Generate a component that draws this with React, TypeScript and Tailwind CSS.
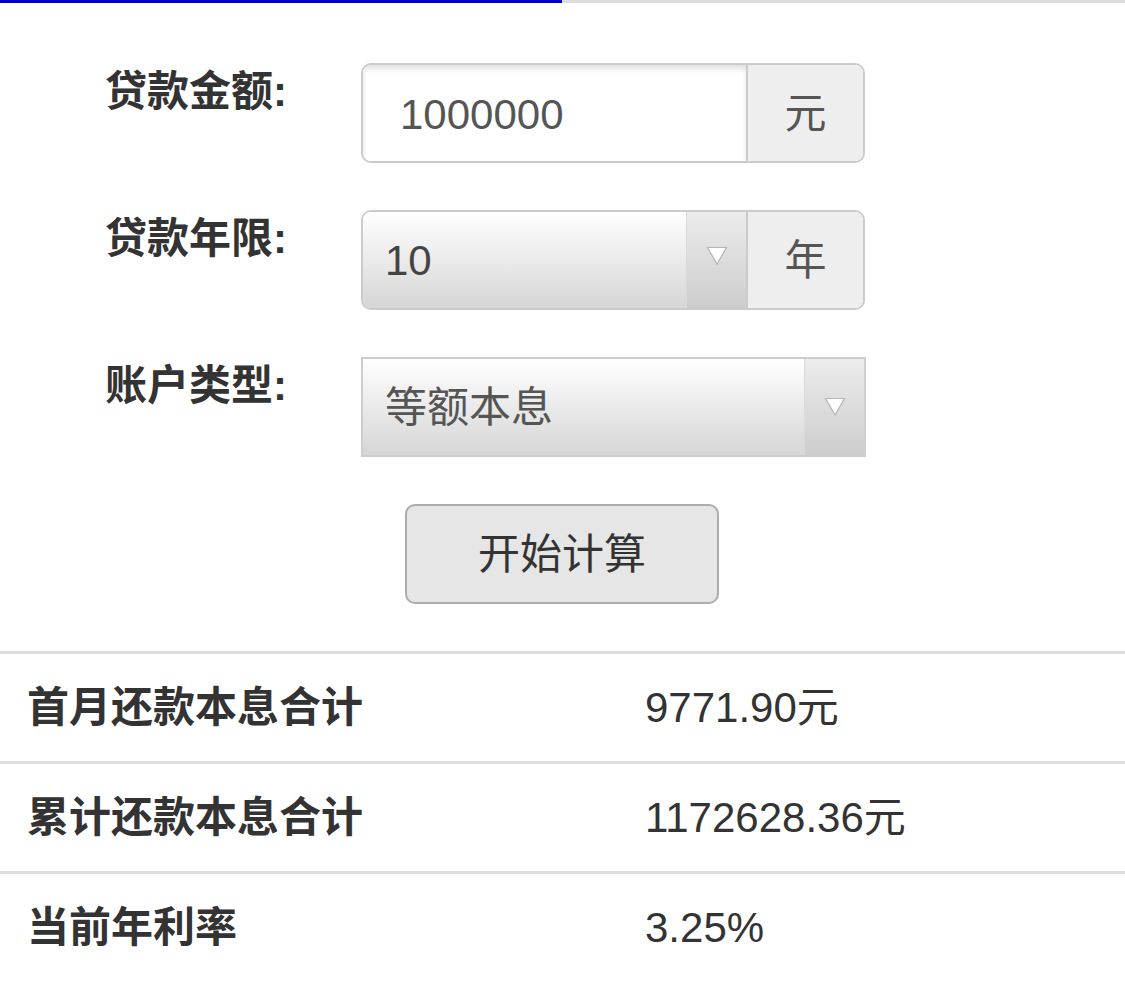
import React from "react";

const FONT = "font-['Liberation_Sans','Noto_Sans_CJK_SC',sans-serif]";

function Arrow() {
  return (
    <svg width="22" height="20" viewBox="0 0 22 20">
      <polygon points="1.5,1.5 20.5,1.5 11,18" fill="#ffffff" stroke="#b5b5b5" strokeWidth="1.2" />
    </svg>
  );
}

function FieldRow({ label, children }: { label: string; children: React.ReactNode }) {
  return (
    <div className="flex items-start pl-[105px] h-[100px]">
      <div className="w-[256px] text-[42px] leading-[58px] font-bold text-[#333]">{label}:</div>
      {children}
    </div>
  );
}

const results = [
  { label: "首月还款本息合计", value: "9771.90元" },
  { label: "累计还款本息合计", value: "1172628.36元" },
  { label: "当前年利率", value: "3.25%" },
];

export default function App() {
  return (
    <div className={`w-[1125px] min-h-[992px] bg-white ${FONT}`}>
      <div className="flex h-[3px] bg-[#dcdcdc]">
        <div className="w-[562px] bg-[#0000d4]" />
      </div>

      <div className="pt-[60px] flex flex-col gap-[47px]">
        <FieldRow label="贷款金额">
          <div className="flex w-[504px] h-[100px] border-2 border-[#cbcbcb] rounded-[10px] overflow-hidden">
            <div className="flex-1 flex items-center pl-[37px] pt-[3px] bg-white shadow-[inset_0_4px_5px_rgba(0,0,0,0.12)] text-[42px] text-[#555]">
              1000000
            </div>
            <div className="w-[117px] flex items-center justify-center bg-[#eeeeee] border-l-2 border-[#cbcbcb] text-[42px] text-[#555]">
              元
            </div>
          </div>
        </FieldRow>

        <FieldRow label="贷款年限">
          <div className="flex w-[504px] h-[100px] border-2 border-[#cbcbcb] rounded-[10px] overflow-hidden">
            <div className="flex-1 flex items-center pl-[22px] bg-linear-to-b from-[#ffffff] to-[#d6d6d6] text-[42px] text-[#444]">
              10
            </div>
            <div className="w-[60px] flex items-start justify-center pt-[34px] bg-linear-to-b from-[#ececec] to-[#cdcdcd] border-l border-[#dadada]">
              <Arrow />
            </div>
            <div className="w-[117px] flex items-center justify-center bg-[#eeeeee] border-l-2 border-[#cbcbcb] text-[42px] text-[#555]">
              年
            </div>
          </div>
        </FieldRow>

        <FieldRow label="账户类型">
          <div className="flex w-[505px] h-[100px] border-2 border-[#cdcdcd]">
            <div className="flex-1 flex items-center pl-[22px] bg-linear-to-b from-[#ffffff] to-[#d6d6d6] text-[42px] text-[#555]">
              等额本息
            </div>
            <div className="w-[60px] flex items-center justify-center bg-linear-to-b from-[#ececec] to-[#cdcdcd] border-l border-[#dadada]">
              <Arrow />
            </div>
          </div>
        </FieldRow>

        <div className="flex justify-center pr-[1px]">
          <button className="w-[314px] h-[100px] rounded-[10px] border-2 border-[#acacac] bg-[#e6e6e6] text-[42px] text-[#333]">
            开始计算
          </button>
        </div>
      </div>

      <div className="mt-[47px]">
        {results.map((r) => (
          <div key={r.label} className="flex items-center h-[110px] border-t-[3px] border-[#dddddd] pl-[27px] text-[42px] text-[#333]">
            <div className="w-[618px] font-bold">{r.label}</div>
            <div>{r.value}</div>
          </div>
        ))}
      </div>
    </div>
  );
}
